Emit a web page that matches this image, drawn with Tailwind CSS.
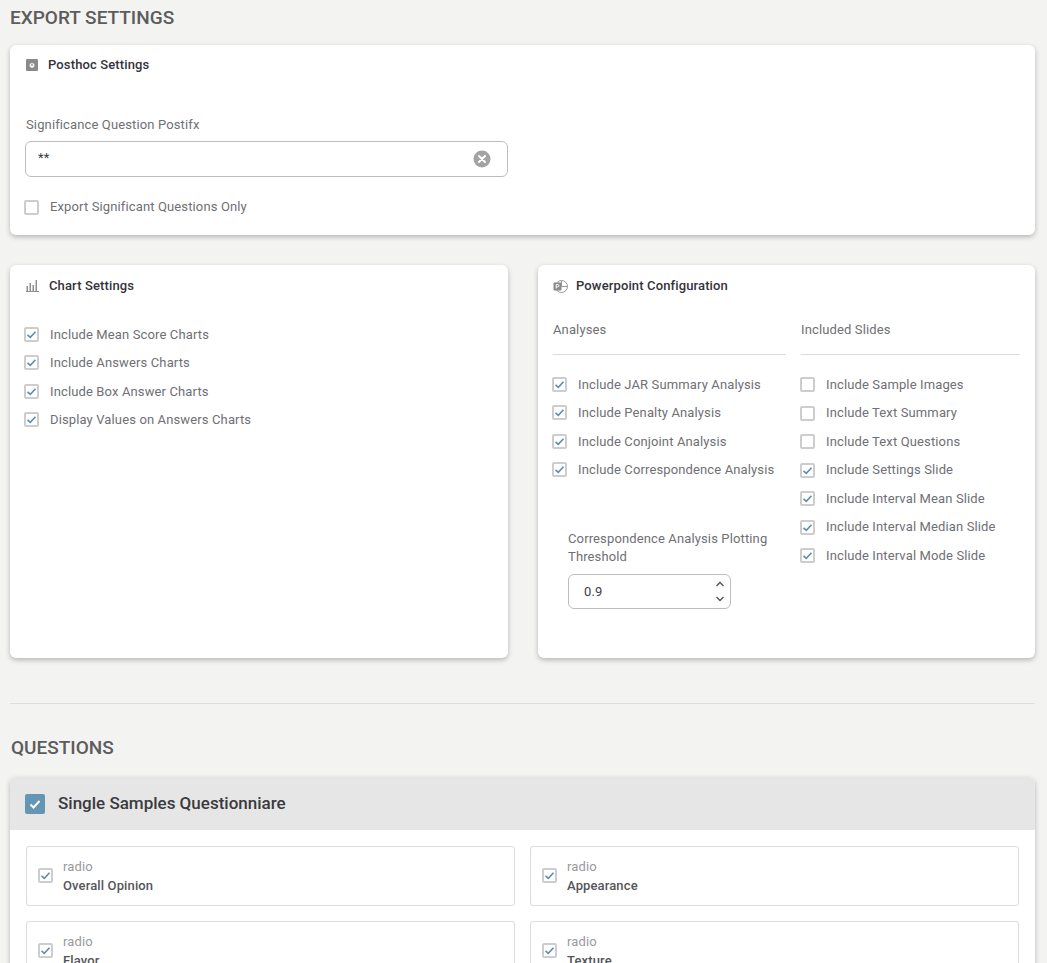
<!DOCTYPE html>
<html lang="en" class="overflow-hidden">
  <head>
    <meta charset="UTF-8" />
    <meta name="viewport" content="width=device-width, initial-scale=1.0" />
    <title>Export Settings</title>
    <script src="https://cdn.jsdelivr.net/npm/@tailwindcss/browser@4"></script>
  </head>
  <body class="h-[963px] overflow-hidden bg-[#f3f3f2] font-['Roboto',sans-serif] text-[13px] tracking-[0.13px] text-[#6f6f75]">
    <div class="pl-[10px] pr-[12px]">
      <h1 class="h-[45px] pt-[6px] text-[19px] leading-[24px] font-medium tracking-normal text-[#5c5c5c]">EXPORT SETTINGS</h1>

      <!-- posthoc -->
      <section class="h-[190px] rounded-md bg-white pt-[11px] pl-[16px] shadow-[0_2px_5px_rgba(0,0,0,0.25)]">
        <h2 class="flex h-[18px] items-center text-[13px] font-medium text-[#33333b]">
          <svg class="mr-[10px] h-3 w-3" viewBox="0 0 12 12"><rect width="12" height="12" rx="1" fill="#8a8a8a" /><path d="M6 3l.6 1 1.200-.2.400 1.100 1 .6-.6 1 .6 1-1 .6-.4 1.100-1.200-.2-.6 1-.6-1-1.200.2-.4-1.100-1-.6.6-1-.6-1 1-.6.4-1.100 1.200.2z" fill="#fff" transform="translate(1.200 1.200) scale(.8)" /><circle cx="6" cy="6" r="0.9" fill="#8a8a8a" /></svg>
          Posthoc Settings
        </h2>
        <label class="mt-[41px] block h-[20px] leading-[20px]">Significance Question Postifx</label>
        <div class="-ml-px mt-[6px] flex h-[36px] w-[483px] items-center justify-between rounded-md border border-[#bdbdbd] pr-[16px] pl-[12px] text-[#3c3c44]">
          <span class="-mt-[2px]">**</span>
          <svg class="h-[18px] w-[18px]" viewBox="0 0 18 18"><circle cx="9" cy="9" r="8.5" fill="#a3a3a3" /><path d="M6 6l6 6M12 6l-6 6" stroke="#fff" stroke-width="2" stroke-linecap="round" /></svg>
        </div>
        <div class="-ml-[2px] mt-[20px] flex h-[20px] items-center">
          <span class="mr-[11px] h-[15px] w-[15px] rounded-[2px] border-2 border-[#cdcdcd]"></span>
          Export Significant Questions Only
        </div>
      </section>

      <div class="mt-[30px] grid grid-cols-[498px_497px] gap-[30px]">
        <!-- chart settings -->
        <section class="h-[393px] rounded-md bg-white pt-[12px] pl-[16px] shadow-[0_2px_5px_rgba(0,0,0,0.25)]">
          <h2 class="flex h-[18px] items-center text-[13px] font-medium text-[#33333b]">
            <svg class="mr-[10px] -mt-[2px] h-[13px] w-[13px]" viewBox="0 0 13 13" fill="#8f8f8f"><rect x="0.500" y="7" width="1.500" height="5" /><rect x="3.500" y="4" width="1.500" height="8" /><rect x="6.500" y="6" width="1.500" height="6" /><rect x="9.500" y="1" width="1.500" height="11" /><rect x="0" y="12" width="13" height="1" /></svg>
            Chart Settings
          </h2>
          <div class="-ml-[2px] mt-[25px]">
            <div class="flex h-[28.5px] items-center">
              <span class="mr-[11px] flex h-[15px] w-[15px] items-center justify-center rounded-[2px] border-2 border-[#cdcdcd]"><svg class="h-[11px] w-[11px]" viewBox="0 0 11 11" fill="none"><path d="M1.5 5.8l2.800 2.600 5.200-5.600" stroke="#5d8fae" stroke-width="1.600" /></svg></span>
              Include Mean Score Charts
            </div>
            <div class="flex h-[28.5px] items-center">
              <span class="mr-[11px] flex h-[15px] w-[15px] items-center justify-center rounded-[2px] border-2 border-[#cdcdcd]"><svg class="h-[11px] w-[11px]" viewBox="0 0 11 11" fill="none"><path d="M1.5 5.8l2.800 2.600 5.200-5.600" stroke="#5d8fae" stroke-width="1.600" /></svg></span>
              Include Answers Charts
            </div>
            <div class="flex h-[28.5px] items-center">
              <span class="mr-[11px] flex h-[15px] w-[15px] items-center justify-center rounded-[2px] border-2 border-[#cdcdcd]"><svg class="h-[11px] w-[11px]" viewBox="0 0 11 11" fill="none"><path d="M1.5 5.8l2.800 2.600 5.200-5.600" stroke="#5d8fae" stroke-width="1.600" /></svg></span>
              Include Box Answer Charts
            </div>
            <div class="flex h-[28.5px] items-center">
              <span class="mr-[11px] flex h-[15px] w-[15px] items-center justify-center rounded-[2px] border-2 border-[#cdcdcd]"><svg class="h-[11px] w-[11px]" viewBox="0 0 11 11" fill="none"><path d="M1.5 5.8l2.800 2.600 5.200-5.600" stroke="#5d8fae" stroke-width="1.600" /></svg></span>
              Display Values on Answers Charts
            </div>
          </div>
        </section>

        <!-- powerpoint -->
        <section class="h-[393px] rounded-md bg-white pt-[12px] pl-[15px] shadow-[0_2px_5px_rgba(0,0,0,0.25)]">
          <h2 class="flex h-[18px] items-center text-[13px] font-medium text-[#33333b]">
            <svg class="mr-[8px] h-[15px] w-[15px]" viewBox="0 0 15 15"><circle cx="8.5" cy="7.5" r="6" fill="#fff" stroke="#9a9a9a" /><path d="M8.5 1.5v6h6" fill="none" stroke="#9a9a9a" /><rect x="0.5" y="3.5" width="8" height="8" rx="1" fill="#8a8a8a" /><path d="M3.2 9.500v-4h1.600a1.200 1.200 0 0 1 0 2.400h-1.600" fill="none" stroke="#fff" /></svg>
            Powerpoint Configuration
          </h2>
          <div class="mt-[25px] grid grid-cols-[233px_219px] gap-[15px]">
            <div>
              <div class="h-[35px] border-b border-[#dcdcdc] leading-[20px]">Analyses</div>
              <div class="-ml-px mt-[15px]">
                <div class="flex h-[28.5px] items-center">
                  <span class="mr-[11px] flex h-[15px] w-[15px] items-center justify-center rounded-[2px] border-2 border-[#cdcdcd]"><svg class="h-[11px] w-[11px]" viewBox="0 0 11 11" fill="none"><path d="M1.5 5.8l2.800 2.600 5.200-5.600" stroke="#5d8fae" stroke-width="1.600" /></svg></span>
                  Include JAR Summary Analysis
                </div>
                <div class="flex h-[28.5px] items-center">
                  <span class="mr-[11px] flex h-[15px] w-[15px] items-center justify-center rounded-[2px] border-2 border-[#cdcdcd]"><svg class="h-[11px] w-[11px]" viewBox="0 0 11 11" fill="none"><path d="M1.5 5.8l2.800 2.600 5.200-5.600" stroke="#5d8fae" stroke-width="1.600" /></svg></span>
                  Include Penalty Analysis
                </div>
                <div class="flex h-[28.5px] items-center">
                  <span class="mr-[11px] flex h-[15px] w-[15px] items-center justify-center rounded-[2px] border-2 border-[#cdcdcd]"><svg class="h-[11px] w-[11px]" viewBox="0 0 11 11" fill="none"><path d="M1.5 5.8l2.800 2.600 5.200-5.600" stroke="#5d8fae" stroke-width="1.600" /></svg></span>
                  Include Conjoint Analysis
                </div>
                <div class="flex h-[28.5px] items-center">
                  <span class="mr-[11px] flex h-[15px] w-[15px] items-center justify-center rounded-[2px] border-2 border-[#cdcdcd]"><svg class="h-[11px] w-[11px]" viewBox="0 0 11 11" fill="none"><path d="M1.5 5.8l2.800 2.600 5.200-5.600" stroke="#5d8fae" stroke-width="1.600" /></svg></span>
                  Include Correspondence Analysis
                </div>
              </div>
              <div class="ml-[15px] mt-[46px]">
                <label class="block w-[215px] leading-[18px]">Correspondence Analysis Plotting Threshold</label>
                <div class="mt-[8px] flex h-[35px] w-[163px] items-center justify-between rounded-md border border-[#bdbdbd] pr-[4px] pl-[15px] text-[#3c3c44]">
                  0.9
                  <svg class="h-[25px] w-[12px]" viewBox="0 0 12 25" fill="none" stroke="#555" stroke-width="1.4"><path d="M2.5 7l3.500-3.500 3.500 3.500M2.500 18l3.500 3.500 3.500-3.500" /></svg>
                </div>
              </div>
            </div>
            <div>
              <div class="h-[35px] border-b border-[#dcdcdc] leading-[20px]">Included Slides</div>
              <div class="-ml-px mt-[15.4px]">
                <div class="flex h-[28.5px] items-center">
                  <span class="mr-[11px] h-[15px] w-[15px] rounded-[2px] border-2 border-[#cdcdcd]"></span>
                  Include Sample Images
                </div>
                <div class="flex h-[28.5px] items-center">
                  <span class="mr-[11px] h-[15px] w-[15px] rounded-[2px] border-2 border-[#cdcdcd]"></span>
                  Include Text Summary
                </div>
                <div class="flex h-[28.5px] items-center">
                  <span class="mr-[11px] h-[15px] w-[15px] rounded-[2px] border-2 border-[#cdcdcd]"></span>
                  Include Text Questions
                </div>
                <div class="flex h-[28.5px] items-center">
                  <span class="mr-[11px] flex h-[15px] w-[15px] items-center justify-center rounded-[2px] border-2 border-[#cdcdcd]"><svg class="h-[11px] w-[11px]" viewBox="0 0 11 11" fill="none"><path d="M1.5 5.8l2.800 2.600 5.200-5.600" stroke="#5d8fae" stroke-width="1.600" /></svg></span>
                  Include Settings Slide
                </div>
                <div class="flex h-[28.5px] items-center">
                  <span class="mr-[11px] flex h-[15px] w-[15px] items-center justify-center rounded-[2px] border-2 border-[#cdcdcd]"><svg class="h-[11px] w-[11px]" viewBox="0 0 11 11" fill="none"><path d="M1.5 5.8l2.800 2.600 5.200-5.600" stroke="#5d8fae" stroke-width="1.600" /></svg></span>
                  Include Interval Mean Slide
                </div>
                <div class="flex h-[28.5px] items-center">
                  <span class="mr-[11px] flex h-[15px] w-[15px] items-center justify-center rounded-[2px] border-2 border-[#cdcdcd]"><svg class="h-[11px] w-[11px]" viewBox="0 0 11 11" fill="none"><path d="M1.5 5.8l2.800 2.600 5.200-5.600" stroke="#5d8fae" stroke-width="1.600" /></svg></span>
                  Include Interval Median Slide
                </div>
                <div class="flex h-[28.5px] items-center">
                  <span class="mr-[11px] flex h-[15px] w-[15px] items-center justify-center rounded-[2px] border-2 border-[#cdcdcd]"><svg class="h-[11px] w-[11px]" viewBox="0 0 11 11" fill="none"><path d="M1.5 5.8l2.800 2.600 5.200-5.600" stroke="#5d8fae" stroke-width="1.600" /></svg></span>
                  Include Interval Mode Slide
                </div>
              </div>
            </div>
          </div>
        </section>
      </div>

      <hr class="mt-[45px] border-[#dedede]" />
      <h1 class="mt-[32px] h-[41px] pl-px text-[19px] leading-[24px] font-medium tracking-normal text-[#5c5c5c]">QUESTIONS</h1>

      <!-- questions -->
      <section class="rounded-md bg-white shadow-[0_2px_5px_rgba(0,0,0,0.25)]">
        <div class="flex h-[53px] items-center rounded-t-md bg-[#e6e6e6] pl-[15px] text-[17px] font-medium tracking-normal text-[#3a3a40]">
          <span class="mr-[13px] flex h-5 w-5 items-center justify-center rounded-[2px] bg-[#6496b4]"><svg class="h-[14px] w-[14px]" viewBox="0 0 14 14" fill="none"><path d="M2.5 7.5l3 3 6-6.500" stroke="#fff" stroke-width="2" /></svg></span>
          Single Samples Questionniare
        </div>
        <div class="grid grid-cols-[489px_489px] gap-x-[15px] gap-y-[15px] px-[16px] pt-[16px] pb-[16px]">
          <div class="flex h-[60px] items-center rounded-[3px] border border-[#dcdcdc] pl-[11px]">
            <span class="mr-[10px] mb-[2px] flex h-[15px] w-[15px] items-center justify-center rounded-[2px] border-2 border-[#cdcdcd]"><svg class="h-[11px] w-[11px]" viewBox="0 0 11 11" fill="none"><path d="M1.5 5.8l2.800 2.600 5.200-5.600" stroke="#5d8fae" stroke-width="1.600" /></svg></span>
            <div class="leading-[19px]"><div class="text-[#99999c]">radio</div><div class="font-medium text-[#55555a]">Overall Opinion</div></div>
          </div>
          <div class="flex h-[60px] items-center rounded-[3px] border border-[#dcdcdc] pl-[11px]">
            <span class="mr-[10px] mb-[2px] flex h-[15px] w-[15px] items-center justify-center rounded-[2px] border-2 border-[#cdcdcd]"><svg class="h-[11px] w-[11px]" viewBox="0 0 11 11" fill="none"><path d="M1.5 5.8l2.800 2.600 5.200-5.600" stroke="#5d8fae" stroke-width="1.600" /></svg></span>
            <div class="leading-[19px]"><div class="text-[#99999c]">radio</div><div class="font-medium text-[#55555a]">Appearance</div></div>
          </div>
          <div class="flex h-[60px] items-center rounded-[3px] border border-[#dcdcdc] pl-[11px]">
            <span class="mr-[10px] mb-[2px] flex h-[15px] w-[15px] items-center justify-center rounded-[2px] border-2 border-[#cdcdcd]"><svg class="h-[11px] w-[11px]" viewBox="0 0 11 11" fill="none"><path d="M1.5 5.8l2.800 2.600 5.200-5.600" stroke="#5d8fae" stroke-width="1.600" /></svg></span>
            <div class="leading-[19px]"><div class="text-[#99999c]">radio</div><div class="font-medium text-[#55555a]">Flavor</div></div>
          </div>
          <div class="flex h-[60px] items-center rounded-[3px] border border-[#dcdcdc] pl-[11px]">
            <span class="mr-[10px] mb-[2px] flex h-[15px] w-[15px] items-center justify-center rounded-[2px] border-2 border-[#cdcdcd]"><svg class="h-[11px] w-[11px]" viewBox="0 0 11 11" fill="none"><path d="M1.5 5.8l2.800 2.600 5.200-5.600" stroke="#5d8fae" stroke-width="1.600" /></svg></span>
            <div class="leading-[19px]"><div class="text-[#99999c]">radio</div><div class="font-medium text-[#55555a]">Texture</div></div>
          </div>
        </div>
      </section>
    </div>
  </body>
</html>
